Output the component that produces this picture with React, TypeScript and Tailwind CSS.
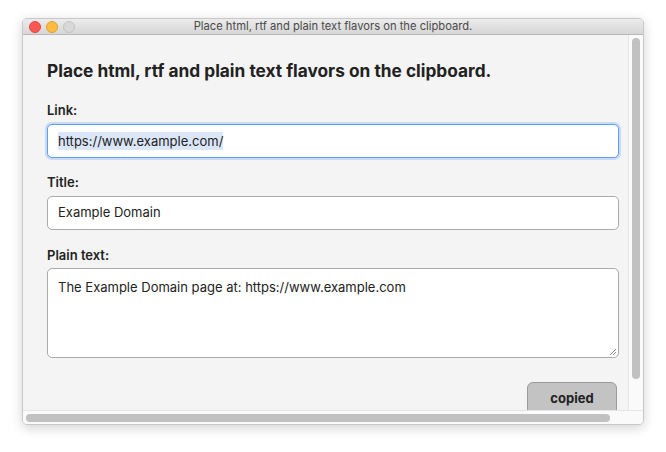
export default function App() {
  const font = { fontFamily: "Inter, 'Liberation Sans', sans-serif" }

  return (
    <div className="w-[666px] h-[452px] bg-white pt-[18px] pl-[22px]" style={font}>
      <div className="w-[622px] h-[407px] flex flex-col border border-[#c8c8c8] rounded-[5px] overflow-hidden shadow-[0_3px_12px_rgba(0,0,0,0.18)] bg-[#f4f4f4]">
        {/* title bar */}
        <div className="h-[16px] shrink-0 relative flex items-center bg-gradient-to-b from-[#ececec] to-[#d6d6d6] border-b border-[#b9b9b9]">
          <div className="flex items-center gap-[5px] pl-[6px]">
            <span className="w-[12px] h-[12px] rounded-full bg-[#fc5753] border border-[#df4744]" />
            <span className="w-[12px] h-[12px] rounded-full bg-[#fdbc40] border border-[#de9f34]" />
            <span className="w-[12px] h-[12px] rounded-full bg-[#d8d8d8] border border-[#c2c2c2]" />
          </div>
          <div className="absolute inset-0 flex items-center justify-center text-[11.2px] text-[#4a4a4a] leading-none">
            Place html, rtf and plain text flavors on the clipboard.
          </div>
        </div>

        <div className="flex-1 flex min-h-0">
          {/* scrolled content */}
          <div className="flex-1 min-w-0 overflow-hidden pl-[24px] pt-[25px] text-[#222]">
            <h1 className="text-[17.3px] font-bold leading-[22px]">
              Place html, rtf and plain text flavors on the clipboard.
            </h1>

            <label className="block mt-[20px] text-[13px] font-semibold leading-[16px]">Link:</label>
            <div className="mt-[6px] w-[572px] h-[34px] rounded-[5px] border border-[#5f9cf2] ring-[2px] ring-[#a9c8f7]/60 bg-white flex items-center pl-[10px] text-[13px]">
              <span className="bg-[#dbe6f9] leading-[18px]">https://www.example.com/</span>
            </div>

            <label className="block mt-[16px] text-[13px] font-semibold leading-[16px]">Title:</label>
            <div className="mt-[6px] w-[572px] h-[34px] rounded-[5px] border border-[#ababab] bg-white flex items-center pl-[10px] text-[13px]">
              Example Domain
            </div>

            <label className="block mt-[17px] text-[13px] font-semibold leading-[16px]">Plain text:</label>
            <div className="mt-[5px] w-[572px] h-[90px] rounded-[5px] border border-[#ababab] bg-white pl-[10px] pt-[9px] text-[13px] leading-[18px] relative">
              The Example Domain page at: https://www.example.com
              <svg className="absolute right-[1px] bottom-[1px]" width="8" height="8" viewBox="0 0 8 8">
                <path d="M7 1 L1 7 M7 4 L4 7" stroke="#8a8a8a" strokeWidth="1" />
              </svg>
            </div>

            <div className="mt-[24px] w-[572px] flex justify-end pr-[2px]">
              <div className="w-[90px] h-[40px] rounded-[6px] border border-[#9a9a9a] bg-[#c3c3c3] flex justify-center pt-[6px] text-[13px] font-bold">
                copied
              </div>
            </div>
          </div>

          {/* vertical scrollbar */}
          <div className="w-[15px] shrink-0 bg-[#fafafa] border-l border-[#e6e6e6] flex justify-center pt-[3px]">
            <div className="w-[8px] h-[341px] rounded-full bg-[#c1c1c1]" />
          </div>
        </div>

        {/* horizontal scrollbar */}
        <div className="h-[14px] shrink-0 bg-[#fafafa] border-t border-[#e6e6e6] flex items-center pl-[3px]">
          <div className="w-[584px] h-[8px] rounded-full bg-[#c1c1c1]" />
        </div>
      </div>
    </div>
  )
}
